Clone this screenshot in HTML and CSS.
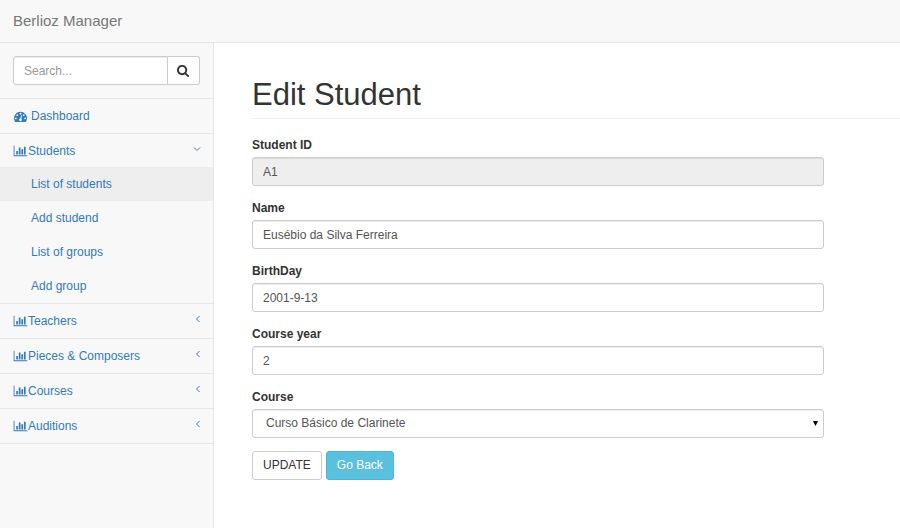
FILE: index.html
```html
<!DOCTYPE html>
<html lang="en">
<head>
<meta charset="utf-8">
<meta name="viewport" content="width=device-width, initial-scale=1">
<title>Berlioz Manager</title>
<link rel="stylesheet" href="styles.css">
</head>
<body>
<svg class="sprite" aria-hidden="true">
  <symbol id="search" viewBox="0 0 1792 1792"><path d="M1152 832q0-185-131.500-316.500t-316.500-131.500-316.500 131.500-131.500 316.500 131.500 316.500 316.500 131.500 316.500-131.500 131.500-316.500zm512 832q0 52-38 90t-90 38q-54 0-90-38l-343-342q-179 124-399 124-143 0-273.500-55.500t-225-150-150-225-55.500-273.500 55.500-273.500 150-225 225-150 273.500-55.500 273.500 55.500 225 150 150 225 55.500 273.500q0 220-124 399l343 343q37 37 37 90z"/></symbol>
  <symbol id="gauge" viewBox="0 0 1792 1792"><path d="M384 1152q0-53-37.500-90.500t-90.500-37.500-90.500 37.500-37.500 90.500 37.500 90.500 90.500 37.500 90.500-37.500 37.500-90.500zm192-448q0-53-37.500-90.500t-90.500-37.500-90.500 37.500-37.500 90.500 37.500 90.500 90.500 37.500 90.500-37.500 37.500-90.500zm428 481l101-382q6-26-7.500-48.500t-38.500-29.500-48 6.500-30 39.500l-101 382q-60 5-107 43.500t-63 98.500q-20 77 20 146t117 89 146-20 89-117q16-60-6-117t-72-91zm660-33q0-53-37.500-90.500t-90.500-37.500-90.500 37.500-37.500 90.500 37.500 90.500 90.500 37.500 90.500-37.500 37.500-90.500zm-640-640q0-53-37.500-90.500t-90.500-37.500-90.500 37.500-37.500 90.500 37.500 90.500 90.500 37.500 90.500-37.500 37.500-90.500zm448 192q0-53-37.500-90.500t-90.500-37.500-90.500 37.500-37.500 90.500 37.500 90.500 90.500 37.500 90.500-37.500 37.500-90.500zm320 448q0 261-141 483-19 29-54 29h-1402q-35 0-54-29-141-221-141-483 0-182 71-348t191-286 286-191 348-71 348 71 286 191 191 286 71 348z"/></symbol>
  <symbol id="chart" viewBox="0 0 2048 1792"><path d="M640 896v512h-256v-512h256zm384-512v1024h-256v-1024h256zm1024 1152v128h-2048v-1536h128v1408h1920zm-640-896v768h-256v-768h256zm384-384v1152h-256v-1152h256z"/></symbol>
  <symbol id="left" viewBox="0 0 8 8"><path d="M6.500 1L3.500 4L6.500 7" fill="none" stroke="currentColor"/></symbol>
  <symbol id="down" viewBox="0 0 8 8"><path d="M1 2.500L4 5.500L7 2.500" fill="none" stroke="currentColor"/></symbol>
</svg>
<header class="topbar"><a class="brand" href="#">Berlioz Manager</a></header>
<div class="layout">
  <nav class="sidebar" aria-label="Main">
    <form class="search" role="search">
      <input class="search-input" type="text" placeholder="Search..." aria-label="Search">
      <button class="search-button" type="button" aria-label="Search"><svg class="icon"><use href="#search"/></svg></button>
    </form>
    <ul class="menu">
      <li class="menu-item"><a class="menu-link spaced" href="#"><svg class="icon"><use href="#gauge"/></svg>Dashboard</a></li>
      <li class="menu-item"><a class="menu-link" href="#"><svg class="icon chart"><use href="#chart"/></svg>Students<svg class="arrow"><use href="#down"/></svg></a>
        <ul class="submenu">
          <li><a class="sub-link active" href="#">List of students</a></li>
          <li><a class="sub-link" href="#">Add studend</a></li>
          <li><a class="sub-link" href="#">List of groups</a></li>
          <li><a class="sub-link" href="#">Add group</a></li>
        </ul>
      </li>
      <li class="menu-item"><a class="menu-link" href="#"><svg class="icon chart"><use href="#chart"/></svg>Teachers<svg class="arrow"><use href="#left"/></svg></a></li>
      <li class="menu-item"><a class="menu-link" href="#"><svg class="icon chart"><use href="#chart"/></svg>Pieces &amp; Composers<svg class="arrow"><use href="#left"/></svg></a></li>
      <li class="menu-item"><a class="menu-link" href="#"><svg class="icon chart"><use href="#chart"/></svg>Courses<svg class="arrow"><use href="#left"/></svg></a></li>
      <li class="menu-item"><a class="menu-link" href="#"><svg class="icon chart"><use href="#chart"/></svg>Auditions<svg class="arrow"><use href="#left"/></svg></a></li>
    </ul>
  </nav>
  <main class="content">
    <h1 class="title">Edit Student</h1>
    <form class="form">
      <div class="group"><label class="label" for="sid">Student ID</label><input class="field" id="sid" type="text" value="A1" disabled></div>
      <div class="group"><label class="label" for="name">Name</label><input class="field" id="name" type="text" value="Eusébio da Silva Ferreira"></div>
      <div class="group"><label class="label" for="birth">BirthDay</label><input class="field" id="birth" type="text" value="2001-9-13"></div>
      <div class="group"><label class="label" for="year">Course year</label><input class="field" id="year" type="text" value="2"></div>
      <div class="group"><label class="label" for="course">Course</label>
        <div class="select-wrap"><select class="field select" id="course"><option>Curso Básico de Clarinete</option></select><svg class="caret" viewBox="0 0 6 6" aria-hidden="true"><path d="M0 0h6L3 6z"/></svg></div>
      </div>
      <div class="actions"><button class="button" type="button">UPDATE</button><button class="button info" type="button">Go Back</button></div>
    </form>
  </main>
</div>
</body>
</html>
```
FILE: styles.css
```css
* { box-sizing: border-box; }
body {
  margin: 0;
  min-height: 100vh;
  display: flex;
  flex-direction: column;
  background: #fff;
  color: #333;
  font: 12px/17px "Liberation Sans", Arial, sans-serif;
}
input, select, button { font: inherit; color: inherit; margin: 0; }
ul { list-style: none; margin: 0; padding: 0; }
a { color: #337ab7; text-decoration: none; }
.sprite { display: none; }
.icon { width: 13px; height: 13px; fill: currentColor; flex: none; }

.topbar {
  padding: 12px 13px;
  background: #f8f8f8;
  border-bottom: 1px solid #e7e7e7;
}
.brand { display: block; color: #777; font-size: 15px; line-height: 18px; }

.layout { flex: 1; display: flex; }
.sidebar {
  width: 214px;
  flex: none;
  background: #f8f8f8;
  border-right: 1px solid #e7e7e7;
}
.search {
  display: flex;
  padding: 13px;
  border-bottom: 1px solid #e7e7e7;
}
.search-input, .search-button {
  height: 29px;
  background: #fff;
  border: 1px solid #ccc;
}
.search-input {
  flex: 1;
  min-width: 0;
  padding: 0 10px;
  border-radius: 3px 0 0 3px;
  box-shadow: inset 0 1px 1px rgba(0, 0, 0, .075);
}
.search-input::placeholder { color: #999; opacity: 1; }
.search-button {
  display: flex;
  align-items: center;
  padding: 0 9px;
  border-left: 0;
  border-radius: 0 3px 3px 0;
}
.menu-item { border-bottom: 1px solid #e7e7e7; }
.menu-link {
  display: flex;
  align-items: center;
  height: 34px;
  padding: 0 12px 0 13px;
}
.spaced { gap: 4px; padding-left: 14px; }
.chart { width: 15px; height: 12px; }
.arrow { width: 8px; height: 8px; margin: 0 0 4px auto; }
.submenu { margin-top: -1px; }
.sub-link { display: block; padding: 9px 31px 8px; }
.active { background: #eee; }

.content { flex: 1; min-width: 0; padding: 35px 0 34px 38px; }
.title {
  margin: 0 0 18px;
  padding-bottom: 6px;
  border-bottom: 1px solid #eee;
  font-size: 31px;
  font-weight: 400;
  line-height: 34px;
}
.form { padding-right: 76px; }
.group + .group { margin-top: 14px; }
.label { display: block; margin-bottom: 3px; font-weight: 700; }
.field {
  display: block;
  width: 100%;
  height: 29px;
  padding: 0 10px;
  color: #555;
  background: #fff;
  border: 1px solid #ccc;
  border-radius: 3px;
  box-shadow: inset 0 1px 1px rgba(0, 0, 0, .075);
}
.field:disabled { background: #eee; opacity: 1; }
.select-wrap { position: relative; }
.select { appearance: none; padding: 0 13px; }
.caret {
  position: absolute;
  right: 6px;
  top: 12px;
  width: 5px;
  height: 5px;
  fill: #000;
  pointer-events: none;
}
.actions { display: flex; gap: 4px; margin-top: 13px; }
.button {
  height: 29px;
  padding: 0 10px;
  background: #fff;
  border: 1px solid #ccc;
  border-radius: 3px;
}
.info { color: #fff; background: #5bc0de; border-color: #46b8da; }
```
